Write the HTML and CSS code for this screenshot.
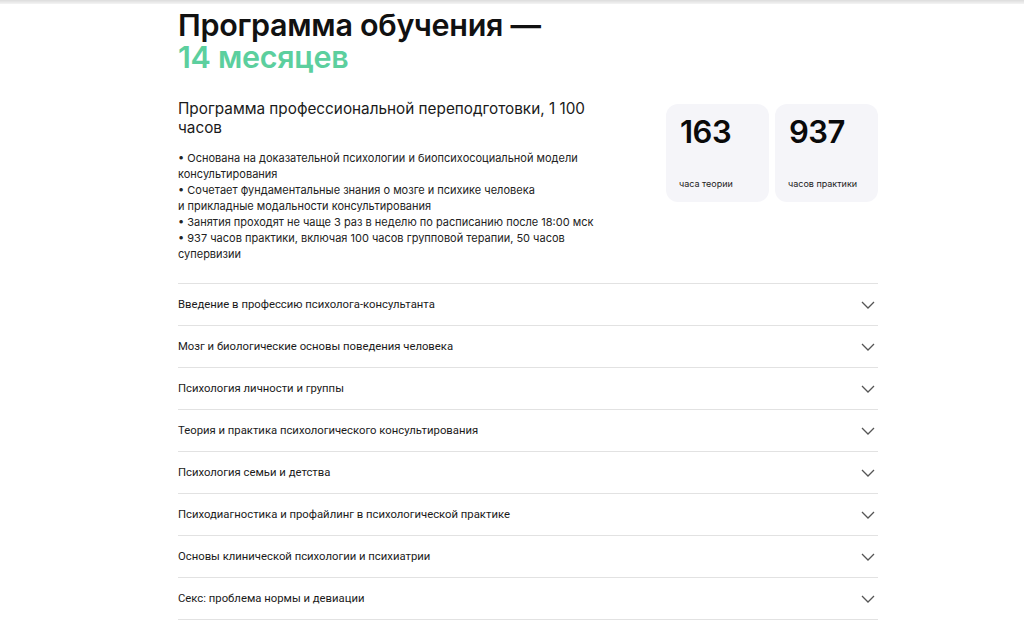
FILE: index.html
```html
<!DOCTYPE html>
<html lang="ru">
<head>
<meta charset="utf-8">
<link rel="stylesheet" href="styles.css">
</head>
<body>
<div class="topbar"></div>
<main class="wrap">
  <h1 class="title"><span class="line">Программа обучения —</span><span class="line accent">14 месяцев</span></h1>
  <section class="intro">
    <div class="desc">
      <p class="lead">Программа профессиональной переподготовки, 1 100 часов</p>
      <ul class="bullets">
        <li>• Основана на доказательной психологии и биопсихосоциальной модели консультирования</li>
        <li>• Сочетает фундаментальные знания о мозге и психике человека<br>и прикладные модальности консультирования</li>
        <li>• Занятия проходят не чаще 3 раз в неделю по расписанию после 18:00 мск</li>
        <li>• 937 часов практики, включая 100 часов групповой терапии, 50 часов супервизии</li>
      </ul>
    </div>
    <div class="stats">
      <div class="card"><div class="num">163</div><div class="label">часа теории</div></div>
      <div class="card"><div class="num">937</div><div class="label">часов практики</div></div>
    </div>
  </section>
  <ul class="acc">
    <li class="row"><span>Введение в профессию психолога-консультанта</span><svg class="chev" viewBox="0 0 14 8"><path d="M1 1l6 6 6-6"/></svg></li>
    <li class="row"><span>Мозг и биологические основы поведения человека</span><svg class="chev" viewBox="0 0 14 8"><path d="M1 1l6 6 6-6"/></svg></li>
    <li class="row"><span>Психология личности и группы</span><svg class="chev" viewBox="0 0 14 8"><path d="M1 1l6 6 6-6"/></svg></li>
    <li class="row"><span>Теория и практика психологического консультирования</span><svg class="chev" viewBox="0 0 14 8"><path d="M1 1l6 6 6-6"/></svg></li>
    <li class="row"><span>Психология семьи и детства</span><svg class="chev" viewBox="0 0 14 8"><path d="M1 1l6 6 6-6"/></svg></li>
    <li class="row"><span>Психодиагностика и профайлинг в психологической практике</span><svg class="chev" viewBox="0 0 14 8"><path d="M1 1l6 6 6-6"/></svg></li>
    <li class="row"><span>Основы клинической психологии и психиатрии</span><svg class="chev" viewBox="0 0 14 8"><path d="M1 1l6 6 6-6"/></svg></li>
    <li class="row"><span>Секс: проблема нормы и девиации</span><svg class="chev" viewBox="0 0 14 8"><path d="M1 1l6 6 6-6"/></svg></li>
  </ul>
</main>
</body>
</html>
```
FILE: styles.css
```css
* { box-sizing: border-box; }
html, body { margin: 0; padding: 0; background: #fff; }
body { font-family: Inter, "Noto Sans", sans-serif; color: #111; }
.topbar { height: 4px; background: linear-gradient(#dcdcdc, #f4f4f4); }
.wrap { width: 700px; margin: 0 0 0 178px; }
.title { margin: 5px 0 0; font-size: 30.5px; line-height: 32px; font-weight: 600; letter-spacing: -0.3px; color: #111; }
.line { display: block; }
.accent { color: #5ccf9e; }
.intro { display: flex; justify-content: space-between; margin-top: 26px; }
.desc { width: 440px; }
.lead { margin: 0; font-size: 15.3px; line-height: 19px; font-weight: 400; color: #1a1a1a; }
.bullets { list-style: none; margin: 13px 0 0; padding: 0; font-size: 11px; line-height: 16px; color: #222; }
.stats { display: flex; gap: 6px; margin-top: 5px; }
.card { width: 103px; height: 98px; background: #f5f5f9; border-radius: 12px; padding: 12px 13px; display: flex; flex-direction: column; justify-content: space-between; }
.num { font-size: 31px; line-height: 32px; font-weight: 600; letter-spacing: -0.5px; color: #0a0a0a; margin-left: 1px; }
.label { font-size: 9px; line-height: 12px; color: #222; margin-bottom: 0; }
.acc { list-style: none; margin: 21px 0 0; padding: 0; border-top: 1px solid #e2e2e2; }
.row { height: 42px; border-bottom: 1px solid #e2e2e2; display: flex; align-items: center; justify-content: space-between; font-family: Roboto, sans-serif; font-size: 11.3px; color: #1a1a1a; padding-right: 3px; }
.chev { width: 14px; height: 8px; fill: none; stroke: #555; stroke-width: 1.3; }
```
